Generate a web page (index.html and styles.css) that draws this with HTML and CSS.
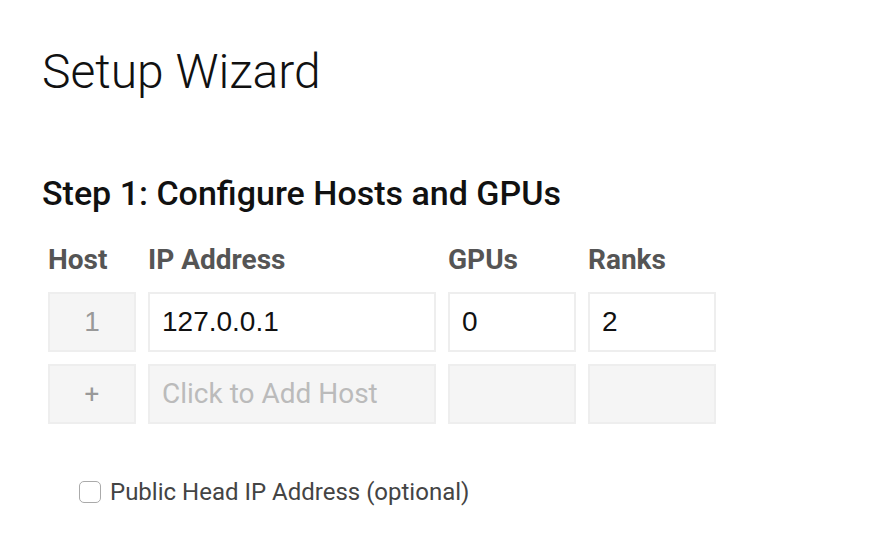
FILE: index.html
```html
<!DOCTYPE html>
<html>
<head>
<meta charset="utf-8">
<link rel="stylesheet" href="styles.css">
</head>
<body>
<div class="page">
  <h1 class="title">Setup Wizard</h1>
  <h2 class="step">Step 1: Configure Hosts and GPUs</h2>
  <div class="grid">
    <div class="head">Host</div>
    <div class="head">IP Address</div>
    <div class="head">GPUs</div>
    <div class="head">Ranks</div>

    <div class="cell gray center num">1</div>
    <div class="cell white">127.0.0.1</div>
    <div class="cell white">0</div>
    <div class="cell white">2</div>

    <div class="cell gray center plus">+</div>
    <div class="cell gray placeholder">Click to Add Host</div>
    <div class="cell gray"></div>
    <div class="cell gray"></div>
  </div>
  <label class="check">
    <span class="box"></span>
    <span class="check-label">Public Head IP Address (optional)</span>
  </label>
</div>
</body>
</html>
```

FILE: styles.css
```css
html, body {
  margin: 0;
  padding: 0;
  background: #fff;
}
.page {
  padding: 44px 0 0 42px;
  font-family: Roboto, "Liberation Sans", sans-serif;
}
.title {
  margin: 0;
  font-weight: 300;
  font-size: 48px;
  line-height: 56px;
  color: #111;
}
.step {
  margin: 73px 0 0 0;
  font-weight: 500;
  font-size: 34px;
  line-height: 40px;
  color: #111;
}
.grid {
  margin: 32px 0 0 6px;
  display: grid;
  grid-template-columns: 88px 288px 128px 128px;
  column-gap: 12px;
  row-gap: 12px;
}
.head {
  font-weight: 700;
  font-size: 28px;
  line-height: 30px;
  padding-bottom: 5px;
  color: #555;
}
.cell {
  box-sizing: border-box;
  height: 60px;
  border: 2px solid #eee;
  font-family: "Liberation Sans", Arial, sans-serif;
  font-size: 28px;
  line-height: 56px;
  padding: 0 12px;
  color: #111;
}
.white { background: #fff; }
.gray { background: #f5f5f5; }
.center { text-align: center; padding: 0; }
.num { color: #999; }
.plus { color: #999; font-family: Roboto, sans-serif; font-size: 26px; }
.placeholder {
  font-family: Roboto, sans-serif;
  font-size: 28px;
  color: #bbb;
}
.check {
  display: flex;
  align-items: center;
  gap: 9px;
  margin: 54px 0 0 37px;
}
.box {
  box-sizing: border-box;
  width: 22px;
  height: 22px;
  border: 1px solid #aaa;
  border-radius: 5px;
  background: #fff;
}
.check-label {
  font-size: 24px;
  line-height: 28px;
  color: #444;
}
```
